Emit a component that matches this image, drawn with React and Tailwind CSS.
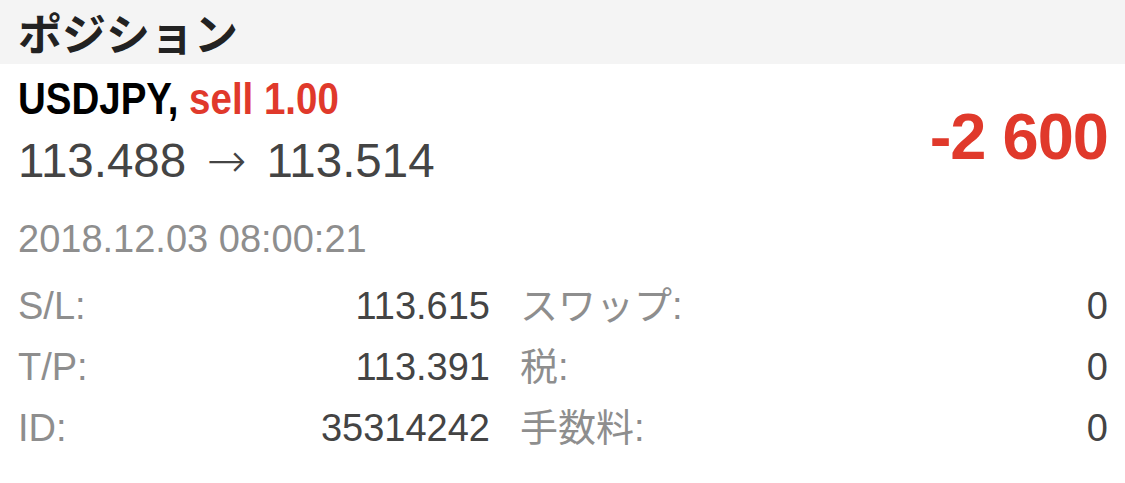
export default function App() {
  const rows = [
    ["S/L:", "113.615", "スワップ:", "0"],
    ["T/P:", "113.391", "税:", "0"],
    ["ID:", "35314242", "手数料:", "0"],
  ];
  const sans = "font-['Helvetica_Neue','Liberation_Sans','Noto_Sans_CJK_JP',sans-serif]";

  return (
    <div className={`w-[1125px] h-[483px] bg-white overflow-hidden ${sans}`}>
      {/* header */}
      <div className="h-[64px] bg-[#f4f4f4] px-[18px] flex items-center">
        <h1 className="text-[44px] leading-none font-bold text-[#222] font-['Noto_Sans_CJK_JP',sans-serif]">
          ポジション
        </h1>
      </div>

      {/* summary */}
      <div className="flex items-center justify-between pl-[18px] pr-[17px] pt-[12px]">
        <div>
          <div className="text-[45px] leading-none font-bold whitespace-nowrap origin-left scale-x-[0.855]">
            <span className="text-black">USDJPY, </span>
            <span className="text-[#e0392b]">sell 1.00</span>
          </div>
          <div className="mt-[16px] text-[47.5px] leading-none text-[#444] whitespace-nowrap">
            113.488{" "}
            <span className="font-['DejaVu_Sans',sans-serif] font-light mx-[7px]">→</span>{" "}
            113.514
          </div>
        </div>
        <div className="pt-[12px] text-[65px] leading-none font-bold text-[#e0392b] tracking-[-1px]">
          -2 600
        </div>
      </div>

      {/* details */}
      <div className="pl-[18px] pr-[17px] mt-[24px] text-[38px]">
        <div className="h-[62px] flex items-center text-[#8e8e8e]">2018.12.03 08:00:21</div>
        <div className="mt-[5px]">
          {rows.map(([l1, v1, l2, v2]) => (
            <div key={l1} className="h-[61px] grid grid-cols-[472px_1fr] items-center">
              <div className="flex items-baseline justify-between">
                <span className="text-[#8e8e8e]">{l1}</span>
                <span className="text-[#444]">{v1}</span>
              </div>
              <div className="flex items-baseline justify-between pl-[30px]">
                <span className="text-[#8e8e8e]">{l2}</span>
                <span className="text-[#444]">{v2}</span>
              </div>
            </div>
          ))}
        </div>
      </div>
    </div>
  );
}
